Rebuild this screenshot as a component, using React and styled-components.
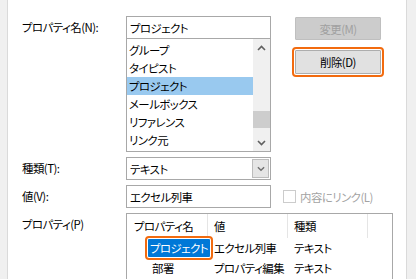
import React from "react";
import styled, { createGlobalStyle } from "styled-components";

const GlobalStyle = createGlobalStyle`
  html, body {
    margin: 0;
    padding: 0;
    background: #fff;
  }
  body {
    font-family: "Noto Sans CJK JP", "Noto Sans", sans-serif;
    font-size: 11.4px;
    font-feature-settings: "palt";
    letter-spacing: -0.5px;
    color: #000;
  }
`;

const focusRing = "#f26b0f";

const Window = styled.div`
  display: flex;
  width: 416px;
  height: 279px;
  overflow: hidden;
  background: #fff;
`;

const Edge = styled.div`
  flex: none;
  width: ${(p) => p.w}px;
  background: #f0f0f0;
  border-${(p) => p.side}: 1px solid #dadada;
`;

const Form = styled.div`
  flex: 1;
  display: grid;
  grid-template-columns: 104px 145px 1fr;
  grid-auto-rows: min-content;
  row-gap: 5px;
  padding: 16px 0 0 14px;
  align-content: start;
`;

const Label = styled.div`
  height: 22px;
  display: flex;
  align-items: center;
  white-space: nowrap;
`;

const Stack = styled.div`
  display: flex;
  flex-direction: column;
`;

const TextBox = styled.div`
  height: 23px;
  box-sizing: border-box;
  border: 1px solid #a8a8a8;
  padding: 0 3px;
  display: flex;
  align-items: center;
  background: #fff;
  white-space: nowrap;
`;

const ListBox = styled.div`
  height: 114px;
  box-sizing: border-box;
  border: 1px solid #a8a8a8;
  margin-top: -1px;
  display: flex;
  overflow: hidden;
`;

const Items = styled.div`
  flex: 1;
  padding-top: 2px;
  overflow: hidden;
`;

const Item = styled.div`
  height: 18px;
  line-height: 18px;
  padding-left: 2px;
  white-space: nowrap;
  background: ${(p) => (p.selected ? "#99c9ef" : "transparent")};
`;

const ScrollBar = styled.div`
  width: 17px;
  flex: none;
  background: #f0f0f0;
  display: flex;
  flex-direction: column;
`;

const ScrollArrow = styled.div`
  height: 17px;
  display: flex;
  align-items: center;
  justify-content: center;
`;

const ScrollTrack = styled.div`
  flex: 1;
  display: flex;
  flex-direction: column;
  justify-content: flex-end;
  padding-bottom: 6px;
`;

const Thumb = styled.div`
  height: 17px;
  background: #cdcdcd;
`;

const ButtonCol = styled.div`
  display: flex;
  flex-direction: column;
  gap: 10px;
  padding: 1px 0 0 24px;
`;

const Button = styled.div`
  width: 86px;
  height: ${(p) => (p.focused ? 24 : 23)}px;
  box-sizing: border-box;
  display: flex;
  align-items: center;
  justify-content: center;
  background: ${(p) => (p.disabled ? "#cccccc" : "#e1e1e1")};
  border: 1px solid ${(p) => (p.disabled ? "#bfbfbf" : "#adadad")};
  color: ${(p) => (p.disabled ? "#a0a0a0" : "#000")};
  outline: ${(p) => (p.focused ? `2px solid ${focusRing}` : "none")};
  outline-offset: 1px;
  border-radius: 1px;
`;

const Combo = styled(TextBox)`
  padding-right: 1px;
  justify-content: space-between;
`;

const DropButton = styled.div`
  width: 17px;
  height: 19px;
  box-sizing: border-box;
  background: #e5e5e5;
  border: 1px solid #bcbcbc;
  display: flex;
  align-items: center;
  justify-content: center;
`;

const CheckRow = styled.div`
  display: flex;
  align-items: center;
  gap: 4px;
  padding-left: 12px;
  color: #a3a3a3;
  white-space: nowrap;
`;

const CheckBox = styled.div`
  width: 13px;
  height: 13px;
  box-sizing: border-box;
  border: 1px solid #cccccc;
  background: #fff;
`;

const PropList = styled.div`
  grid-column: 2 / 4;
  width: 267px;
  height: 80px;
  box-sizing: border-box;
  border: 1px solid #a8a8a8;
  border-bottom: none;
`;

const PropRow = styled.div`
  display: grid;
  grid-template-columns: 81px 80px 80px 1fr;
  height: ${(p) => (p.header ? 24 : 20)}px;
  align-items: center;
`;

const HeadCell = styled.div`
  height: 100%;
  box-sizing: border-box;
  display: flex;
  align-items: center;
  padding-left: ${(p) => p.pad || 6}px;
  border-right: ${(p) => (p.last ? "none" : "1px solid #e5e5e5")};
  white-space: nowrap;
`;

const Cell = styled.div`
  padding-left: ${(p) => p.pad || 6}px;
  white-space: nowrap;
`;

const SelectedName = styled.span`
  display: inline-block;
  line-height: 18px;
  padding: 0 2px;
  background: #0078d7;
  color: #fff;
  border-radius: 1px;
  outline: 2px solid ${focusRing};
  outline-offset: 1px;
`;

const Chevron = ({ dir = "down", color = "#606060", w = 9 }) => (
  <svg width={w} height="6" viewBox="0 0 9 6">
    <path
      d={dir === "up" ? "M1 5 L4.5 1.5 L8 5" : "M1 1 L4.5 4.5 L8 1"}
      fill="none"
      stroke={color}
      strokeWidth="1.6"
    />
  </svg>
);

const items = ["グループ", "タイピスト", "プロジェクト", "メールボックス", "リファレンス", "リンク元"];

export default function App() {
  return (
    <Window>
      <GlobalStyle />
      <Edge w={7} side="right" />
      <Form>
        <Label>プロパティ名(N):</Label>
        <Stack>
          <TextBox>プロジェクト</TextBox>
          <ListBox>
            <Items>
              {items.map((t) => (
                <Item key={t} selected={t === "プロジェクト"}>
                  {t}
                </Item>
              ))}
            </Items>
            <ScrollBar>
              <ScrollArrow>
                <Chevron dir="up" />
              </ScrollArrow>
              <ScrollTrack>
                <Thumb />
              </ScrollTrack>
              <ScrollArrow>
                <Chevron />
              </ScrollArrow>
            </ScrollBar>
          </ListBox>
        </Stack>
        <ButtonCol>
          <Button disabled>変更(M)</Button>
          <Button focused>削除(D)</Button>
        </ButtonCol>

        <Label>種類(T):</Label>
        <Combo>
          テキスト
          <DropButton>
            <Chevron color="#707070" w={8} />
          </DropButton>
        </Combo>
        <div />

        <Label>値(V):</Label>
        <TextBox>エクセル列車</TextBox>
        <CheckRow>
          <CheckBox />
          内容にリンク(L)
        </CheckRow>

        <Label>プロパティ(P)</Label>
        <PropList>
          <PropRow header>
            <HeadCell pad={7}>プロパティ名</HeadCell>
            <HeadCell>値</HeadCell>
            <HeadCell>種類</HeadCell>
            <HeadCell last />
          </PropRow>
          <PropRow>
            <Cell pad={21}>
              <SelectedName>プロジェクト</SelectedName>
            </Cell>
            <Cell>エクセル列車</Cell>
            <Cell>テキスト</Cell>
            <Cell />
          </PropRow>
          <PropRow>
            <Cell pad={25}>部署</Cell>
            <Cell>プロパティ編集</Cell>
            <Cell>テキスト</Cell>
            <Cell />
          </PropRow>
        </PropList>
      </Form>
      <Edge w={9} side="left" />
    </Window>
  );
}
